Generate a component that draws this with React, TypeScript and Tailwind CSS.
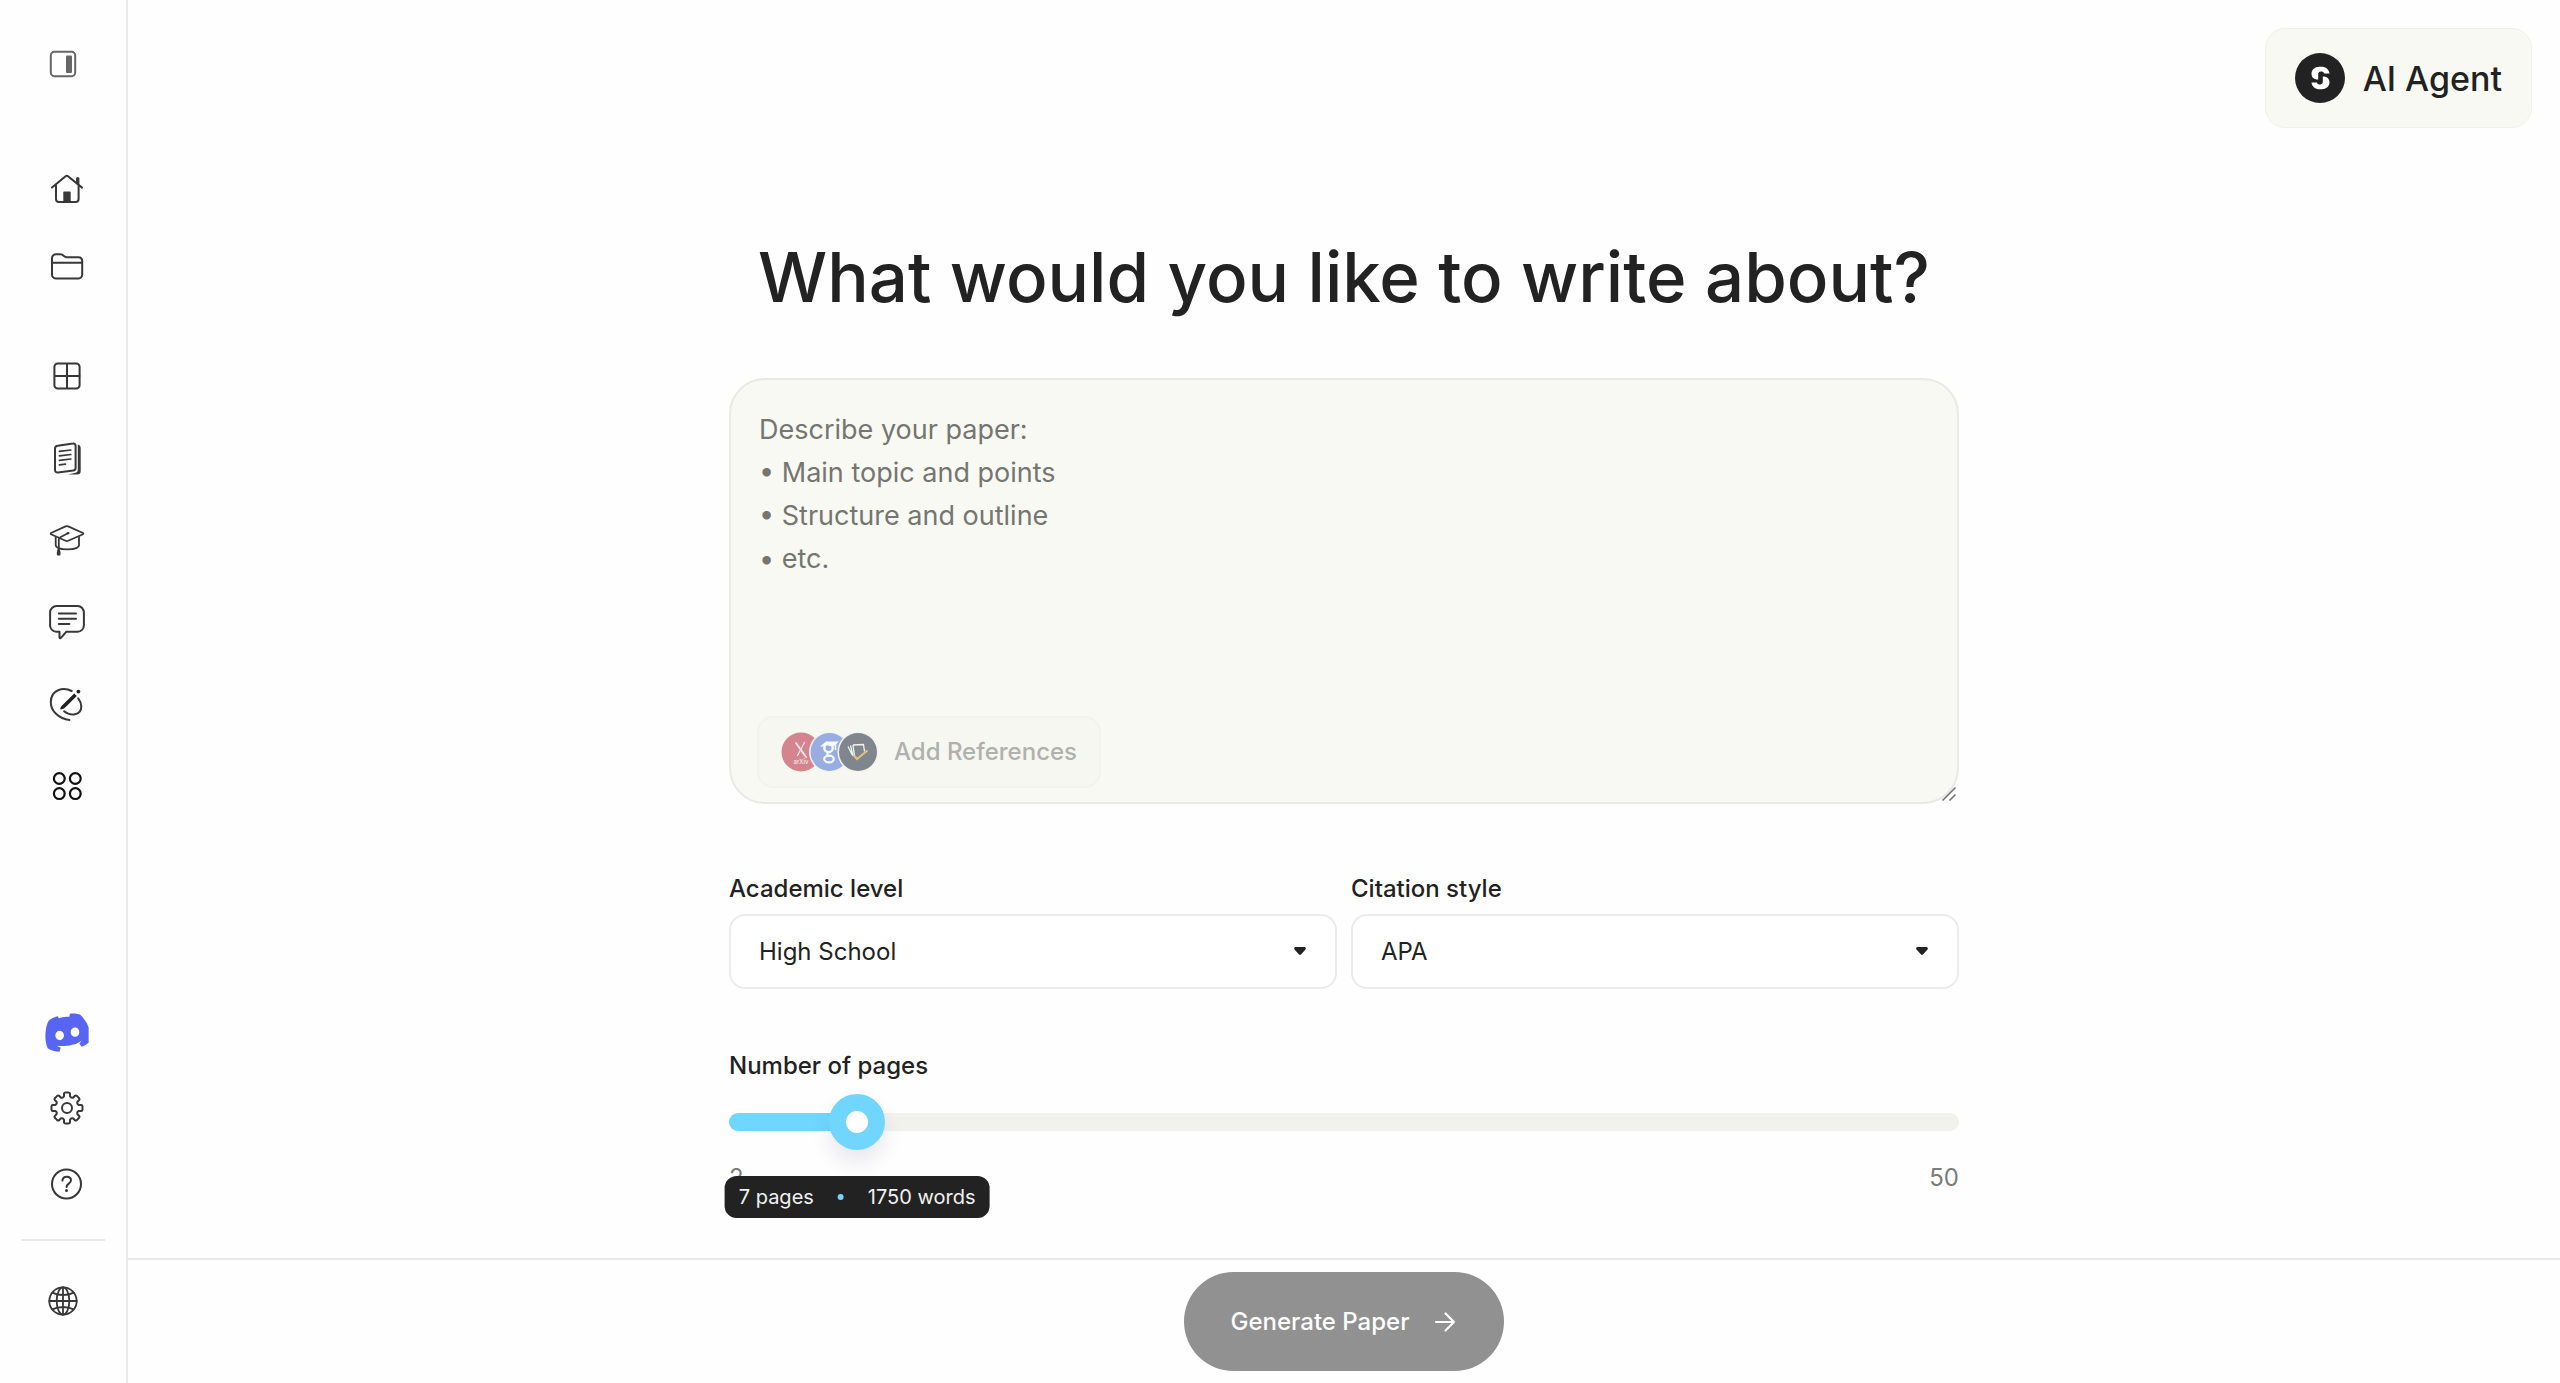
import { useState, type ReactNode } from 'react';

type IconProps = { w?: number; h?: number; children: ReactNode; color?: string };

function Icon({ w = 36, h = 36, color = '#383838', children }: IconProps) {
  return (
    <svg
      width={w}
      height={h}
      viewBox={`0 0 ${w} ${h}`}
      fill="none"
      stroke={color}
      strokeWidth={2}
      strokeLinecap="round"
      strokeLinejoin="round"
      aria-hidden="true"
    >
      {children}
    </svg>
  );
}

function PanelIcon() {
  return (
    <Icon w={32} h={32} color="#666666">
      <rect x={3.8} y={3.8} width={24.4} height={24.4} rx={3.6} />
      <rect x={19} y={7.5} width={6} height={17.5} rx={1} fill="#666666" stroke="none" />
    </Icon>
  );
}

function HomeIcon() {
  return (
    <Icon h={34}>
      <path d="M3 15.6 16.6 4.2a2 2 0 0 1 2.4 0L33 15.6" />
      <path d="M7 13.6V27a3 3 0 0 0 3 3h16.6a3 3 0 0 0 3-3V14" />
      <path d="M27 11V6.6a1.6 1.6 0 0 1 3.4 0V14z" fill="#383838" stroke="none" />
      <path d="M14.3 30v-9.4a1 1 0 0 1 1-1h5.4a1 1 0 0 1 1 1V30z" fill="#383838" stroke="none" />
    </Icon>
  );
}

function FolderIcon() {
  return (
    <Icon h={34}>
      <path d="M3 8.2a4 4 0 0 1 4-4h4.6c2.6 0 3.4 3 6 3h12a3.6 3.6 0 0 1 3.6 3.6v14a3.6 3.6 0 0 1-3.6 3.6h-23A3.6 3.6 0 0 1 3 24.8z" />
      <path d="M3.4 12.7h29.4" />
    </Icon>
  );
}

function GridIcon() {
  return (
    <Icon w={32} h={32}>
      <rect x={3.4} y={3.4} width={25.2} height={25.2} rx={3.4} />
      <path d="M16 4v24M4 16h24.4" />
    </Icon>
  );
}

function PapersIcon() {
  return (
    <Icon w={32}>
      <path d="M6.7 5.7 22 3.5a2.2 2.2 0 0 1 2.6 2.2V28a2.6 2.6 0 0 1-2.3 2.6L7 32.5a2.6 2.6 0 0 1-3-2.4V8.6a3 3 0 0 1 2.7-2.9z" />
      <path d="M8.4 11.3 19.8 10M8.4 15.8l11.4-1.3M8.4 20.4 19.8 19M8.4 24.8l6-.6" strokeWidth={1.7} />
      <path
        d="M26.8 4.6c1.9.5 2.9 1.6 2.9 3.4v23a3.6 3.6 0 0 1-3.6 3.6h-9l7.6-1.8a2.9 2.9 0 0 0 2.1-2.8z"
        fill="#383838"
        stroke="none"
      />
    </Icon>
  );
}

function CapIcon() {
  return (
    <Icon>
      <g strokeWidth={1.8}>
        <path d="M2 11 16.6 4.4a3 3 0 0 1 2.6 0L34 11a.7.7 0 0 1 0 1.2l-14.800 6.600a3 3 0 0 1-2.600 0L2 12.200a.7.7 0 0 1 0-1.200z" />
        <path d="M6.700 15v8.200c0 5.600 23.300 5.600 23.300 0V15" />
        <path d="M19 11.200 11.300 15.200c-1 .6-1.500 1.100-1.500 2.200v11" />
      </g>
      <ellipse cx={19} cy={11.2} rx={1.5} ry={1.1} fill="#383838" stroke="none" />
      <path d="M9.700 26.500c1.500 0 2.200 4.800 1.700 6.400a1 1 0 0 1-1 .7H9a1 1 0 0 1-1-.7c-.5-1.600.2-6.400 1.700-6.400z" fill="#383838" stroke="none" />
    </Icon>
  );
}

function ChatIcon() {
  return (
    <Icon h={38}>
      <path d="M7.400 3.100h21.200a6.300 6.300 0 0 1 6.300 6.300v13a6.300 6.300 0 0 1-6.300 6.300H17.400L12 34.800c-.8.800-1.500.5-1.500-.6v-5.500H7.400a6.300 6.300 0 0 1-6.300-6.300v-13a6.300 6.300 0 0 1 6.300-6.300z" />
      <path d="M9.800 10.500H27M9.800 15.800H27M9.800 21.100h10.600" />
    </Icon>
  );
}

function PenIcon() {
  return (
    <Icon>
      <path d="M22.600 5C14.500 1 1.800 3.400 1.800 16.200c0 9.200 8.400 16.600 18.600 17.800" />
      <path d="M29.200 12.300c1.900 2.400 3.100 5.500 3.100 8.200 0 9.500-11.300 9.600-17.200 4.800" />
      <path d="M11.300 23.400c0-1.800.8-3 2-4.200L25.200 7.400l2.600 2.600L15.900 21.700c-1.200 1.100-2.700 1.700-4.600 1.700z" fill="#222222" stroke="none" />
      <circle cx={29.4} cy={5.6} r={1.9} fill="#222222" stroke="none" />
    </Icon>
  );
}

function CirclesIcon() {
  return (
    <Icon color="#111111">
      <g strokeWidth={2.2}>
        <circle cx={10.3} cy={10.5} r={5.4} />
        <circle cx={26.3} cy={10.5} r={5.4} />
        <circle cx={10.3} cy={25.6} r={5.4} />
        <circle cx={26.3} cy={25.6} r={5.4} />
      </g>
    </Icon>
  );
}

function DiscordIcon() {
  return (
    <svg width={44} height={39} viewBox="0 0 132 116" fill="#5865f2" aria-hidden="true">
      <path
        fillRule="evenodd"
        d="M38 9l4 6c10-3 20-4 31-4l2-10c10-1 22 0 30 3 13 12 23 28 26 40v44c-7 6-13 10-21 13l-7-9 7-10C90 98 60 100 35 98l12 6-3 12c-14-2-26-4-36-11C2 92 0 75 2 55c1-13 4-23 8-31 8-9 18-12 28-15zM44 53a13 14 0 1 0 0 28 13 14 0 1 0 0-28zM90 43a13 14 0 1 0 0 28 13 14 0 1 0 0-28z"
      />
    </svg>
  );
}

// Eight rounded teeth around the centre (18, 18).
const gearPath = (() => {
  const at = (radius: number, degrees: number) => {
    const a = (degrees * Math.PI) / 180;
    return `${(18 + radius * Math.cos(a)).toFixed(2)} ${(18 + radius * Math.sin(a)).toFixed(2)}`;
  };
  let d = '';
  for (let k = 0; k < 8; k += 1) {
    const t = k * 45;
    d += `${k === 0 ? 'M' : 'L'}${at(12.2, t - 14)}`;
    d += `L${at(14.6, t - 12)}Q${at(15.6, t - 11)} ${at(15.6, t - 6)}`;
    d += `L${at(15.6, t + 6)}Q${at(15.6, t + 11)} ${at(14.6, t + 12)}`;
    d += `L${at(12.2, t + 14)}Q${at(10.4, t + 22.5)} ${at(12.2, t + 31)}`;
  }
  return `${d}Z`;
})();

function GearIcon() {
  return (
    <Icon>
      <path d={gearPath} />
      <circle cx={18} cy={18} r={5} />
    </Icon>
  );
}

function HelpIcon() {
  return (
    <Icon>
      <circle cx={17.5} cy={18} r={14.5} />
      <path d="M13.400 14.600c.2-2.500 2-3.900 4.300-3.900 2.500 0 4.300 1.500 4.300 3.600 0 3.300-4.400 3.400-4.400 6.700" />
      <circle cx={17.5} cy={24.6} r={1.5} fill="#383838" stroke="none" />
    </Icon>
  );
}

function GlobeIcon() {
  return (
    <Icon w={32} h={32}>
      <g strokeWidth={1.8}>
        <circle cx={16} cy={16} r={13.7} />
        <ellipse cx={16} cy={16} rx={6.3} ry={13.7} />
        <path d="M16 2.300v27.400M2.300 16h27.400M5.400 7.600c3 1.600 6.800 2.400 10.600 2.400s7.600-.8 10.600-2.400M5.400 24.400c3-1.600 6.800-2.400 10.600-2.400s7.600.8 10.600 2.400" />
      </g>
    </Icon>
  );
}

function NavButton({ label, children }: { label: string; children: ReactNode }) {
  return (
    <button type="button" aria-label={label} className="flex size-12 items-center justify-center">
      {children}
    </button>
  );
}

function Sidebar() {
  return (
    <aside className="flex w-32 shrink-0 flex-col items-center border-r-2 border-[#e9e9e9] pt-10 pb-[58px]">
      <NavButton label="Toggle sidebar">
        <PanelIcon />
      </NavButton>
      <nav aria-label="Workspace" className="mt-[77px] flex flex-col gap-[30px] pl-2">
        <NavButton label="Home">
          <HomeIcon />
        </NavButton>
        <NavButton label="Documents">
          <FolderIcon />
        </NavButton>
      </nav>
      <nav aria-label="Tools" className="mt-[61px] flex flex-col gap-[34px] pl-2">
        <NavButton label="Templates">
          <GridIcon />
        </NavButton>
        <NavButton label="Papers">
          <PapersIcon />
        </NavButton>
        <NavButton label="Research">
          <CapIcon />
        </NavButton>
        <NavButton label="Chat">
          <ChatIcon />
        </NavButton>
        <NavButton label="Editor">
          <PenIcon />
        </NavButton>
        <NavButton label="More tools">
          <CirclesIcon />
        </NavButton>
      </nav>
      <div className="mt-auto flex flex-col gap-7 pl-2">
        <a href="#discord" aria-label="Discord" className="flex size-12 items-center justify-center">
          <DiscordIcon />
        </a>
        <NavButton label="Settings">
          <GearIcon />
        </NavButton>
        <NavButton label="Help">
          <HelpIcon />
        </NavButton>
      </div>
      <hr className="mt-[31px] mb-9 w-[84px] border-t-2 border-[#e9e9e9]" />
      <NavButton label="Language">
        <GlobeIcon />
      </NavButton>
    </aside>
  );
}

function AgentLogo() {
  const hook =
    'M34.600 20.600c-.8-4.400-3.900-6.800-8-6.800h-2.200c-4.600 0-7.900 3-7.900 7 0 3.200 1.800 5.200 4.900 5.800h1.800v-5.400c0-1.600 1-2.600 2.600-2.600h.8c1.300 0 2.200.8 2.500 2z';
  return (
    <svg width={50} height={50} viewBox="0 0 50 50" aria-hidden="true">
      <circle cx={25} cy={25} r={25} fill="#222222" />
      <g fill="#ffffff">
        <path d={hook} />
        <path d={hook} transform="rotate(180 25.500 25)" />
      </g>
    </svg>
  );
}

function SourceBadges() {
  return (
    <svg width={97} height={40} viewBox="0 0 97 40" aria-hidden="true">
      <circle cx={20} cy={20} r={19.5} fill="#d3848f" />
      <g stroke="#f6e6e6" fill="none" strokeLinecap="round">
        <path d="m15 11 10 14" strokeWidth={2} />
        <path d="m23.500 10.500-7 13" strokeWidth={1.2} />
      </g>
      <text x={12.5} y={32} fontSize={6} fontFamily="Inter, sans-serif" fill="#f6e6e6">
        arXiv
      </text>
      <circle cx={48.5} cy={20} r={20.5} fill="#f3f4ee" />
      <circle cx={48.5} cy={20} r={19} fill="#98aee0" />
      <g stroke="#f7f9f7" fill="none">
        <circle cx={47.5} cy={16} r={4.2} strokeWidth={2.4} />
        <path d="M47.500 20.500c-2.500 1.600-1 3 .8 3.600" strokeWidth={2} />
        <ellipse cx={48} cy={27} rx={4.8} ry={3.4} strokeWidth={2.2} />
        <path d="M54.500 11v7" strokeWidth={1.6} />
      </g>
      <path d="m39 14.500 6-5h13l-5 4.500h-4.500l-3-1.500-3.500 2z" fill="#f7f9f7" />
      <circle cx={77} cy={20} r={20.5} fill="#f3f4ee" />
      <circle cx={77} cy={20} r={19} fill="#80868e" />
      <g stroke="#f3f4ee" fill="none" strokeWidth={1.3} strokeLinejoin="round">
        <path d="m72 13 10.500-.5 1 7" />
        <path d="M72 13l1.500 11.500M69.500 13.500 72 24M67 14.500l4 8" />
      </g>
      <path d="m73 23.500 3 3.500 10.500-8.500" stroke="#dfc27a" strokeWidth={2.2} fill="none" />
    </svg>
  );
}

type SelectFieldProps = { id: string; label: string; options: string[] };

function SelectField({ id, label, options }: SelectFieldProps) {
  return (
    <div className="flex flex-col gap-[9px]">
      <label htmlFor={id} className="text-2xl font-medium">
        {label}
      </label>
      <div className="relative">
        <select
          id={id}
          className="h-[75px] w-full appearance-none rounded-2xl border-2 border-[#ebebeb] bg-white px-7 text-2xl text-[#222222]"
        >
          {options.map((option) => (
            <option key={option}>{option}</option>
          ))}
        </select>
        <svg
          width={14}
          height={10}
          viewBox="0 0 14 10"
          className="pointer-events-none absolute top-8 right-[30px]"
          aria-hidden="true"
        >
          <path d="M2.600 1h8.800a1.500 1.500 0 0 1 1.100 2.500L8.200 8.300a1.600 1.600 0 0 1-2.400 0L1.500 3.500A1.500 1.500 0 0 1 2.600 1z" fill="#222222" />
        </svg>
      </div>
    </div>
  );
}

const MIN_PAGES = 2;
const MAX_PAGES = 50;
const WORDS_PER_PAGE = 250;

function PagesSlider() {
  const [pages, setPages] = useState(7);
  const percent = `${((pages - MIN_PAGES) / (MAX_PAGES - MIN_PAGES)) * 100}%`;
  return (
    <div className="mt-[61px]">
      <label htmlFor="pages" className="block text-2xl font-medium">
        Number of pages
      </label>
      <div className="relative mt-3 flex h-14 items-center">
        <div className="h-[18px] w-full overflow-hidden rounded-full bg-[#f1f2ed]">
          <div className="h-full bg-[#70d6ff]" style={{ width: percent }} />
        </div>
        <input
          id="pages"
          type="range"
          min={MIN_PAGES}
          max={MAX_PAGES}
          value={pages}
          onChange={(event) => setPages(Number(event.target.value))}
          className="absolute -left-7 h-14 w-[calc(100%+56px)] cursor-pointer appearance-none bg-transparent [&::-webkit-slider-thumb]:size-14 [&::-webkit-slider-thumb]:appearance-none [&::-webkit-slider-thumb]:rounded-full [&::-webkit-slider-thumb]:border-[17px] [&::-webkit-slider-thumb]:border-[#70d6ff] [&::-webkit-slider-thumb]:bg-white [&::-webkit-slider-thumb]:shadow-[0_12px_20px_rgba(40,40,90,0.10)]"
        />
        <output
          htmlFor="pages"
          className="absolute top-[82px] z-10 flex h-[42px] -translate-x-1/2 items-center gap-6 rounded-xl bg-[#222222] px-3.5 text-xl whitespace-nowrap text-[#f1f1f1]"
          style={{ left: percent }}
        >
          <span>{pages} pages</span>
          <span className="size-1.5 rounded-full bg-[#70d6ff]" />
          <span>{pages * WORDS_PER_PAGE} words</span>
        </output>
      </div>
      <div className="mt-3 flex justify-between text-2xl text-[#7b7b7b]">
        <span>{MIN_PAGES}</span>
        <span>{MAX_PAGES}</span>
      </div>
    </div>
  );
}

export default function App() {
  return (
    <div className="flex min-h-screen bg-[#fefefe] font-['Inter',sans-serif] text-[#222222]">
      <Sidebar />
      <div className="flex min-w-0 flex-1 flex-col">
        <header className="flex justify-end px-7 pt-7">
          <button
            type="button"
            className="flex h-[100px] items-center gap-[18px] rounded-[20px] border border-[#f0f1eb] bg-[#f8f9f3] px-[29px] text-[34px] font-medium"
          >
            <AgentLogo />
            AI Agent
          </button>
        </header>
        <main className="mx-auto w-full max-w-[1230px] flex-1">
          <h1 className="mt-[109px] text-center text-[69px] leading-20 font-medium">
            What would you like to write about?
          </h1>
          <div className="relative mt-[61px]">
            <textarea
              aria-label="Describe your paper"
              placeholder={'Describe your paper:\n• Main topic and points\n• Structure and outline\n• etc.'}
              className="block h-[426px] w-full rounded-[36px] border-2 border-[#e9eae5] bg-[#f8f9f3] px-7 py-7 text-[27px] leading-[43px] placeholder:text-[#757571] [&::-webkit-resizer]:hidden"
            />
            <svg
              width={16}
              height={16}
              viewBox="0 0 16 16"
              className="pointer-events-none absolute right-0.5 bottom-0.5"
              fill="none"
              stroke="#757575"
              strokeWidth={1.6}
              aria-hidden="true"
            >
              <path d="M1.500 14.500l13-13M8.500 14.500l6-6" />
            </svg>
            <button
              type="button"
              disabled
              className="absolute bottom-4 left-7 flex h-[72px] items-center gap-4 rounded-2xl border-2 border-[#f2f3ed] bg-[#f6f7f0] px-[22px] text-2xl font-medium text-[#b0b1ac]"
            >
              <SourceBadges />
              Add References
            </button>
          </div>
          <div className="mt-[69px] grid grid-cols-2 gap-3.5">
            <SelectField id="level" label="Academic level" options={['High School', 'College', 'University']} />
            <SelectField id="citation" label="Citation style" options={['APA', 'MLA', 'Chicago']} />
          </div>
          <PagesSlider />
        </main>
        <footer className="flex justify-center border-t-2 border-[#e9e9e9] py-3">
          <button
            type="button"
            disabled
            className="flex h-[99px] items-center gap-6 rounded-full bg-[#919191] px-[47px] text-2xl font-medium text-white"
          >
            Generate Paper
            <svg
              width={24}
              height={24}
              viewBox="0 0 24 24"
              fill="none"
              stroke="#ffffff"
              strokeWidth={2.2}
              strokeLinecap="round"
              strokeLinejoin="round"
              aria-hidden="true"
            >
              <path d="M3 12h18M12.500 3.500 21 12l-8.500 8.500" />
            </svg>
          </button>
        </footer>
      </div>
    </div>
  );
}
